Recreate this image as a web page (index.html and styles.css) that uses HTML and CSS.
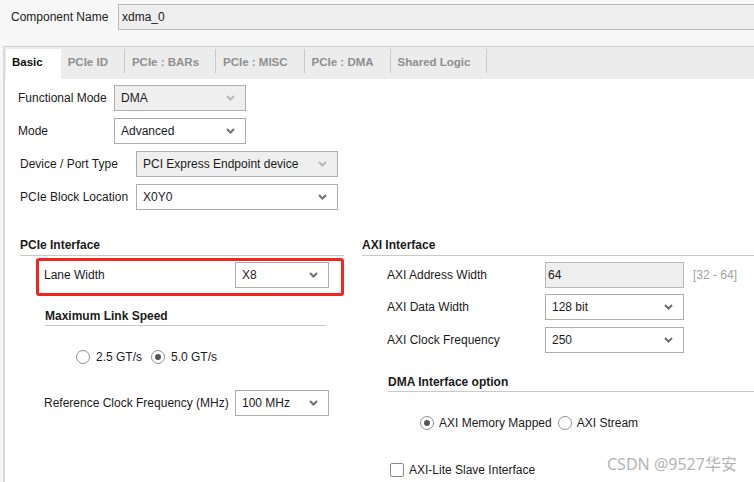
FILE: index.html
```html
<!DOCTYPE html>
<html lang="en">
  <head>
    <meta charset="UTF-8" />
    <meta name="viewport" content="width=device-width, initial-scale=1.0" />
    <title>Customize IP - xdma_0</title>
    <link rel="stylesheet" href="styles.css">
  </head>
  <body>
    <!-- Component name -->
    <div class="component-bar">
      <span class="component-label">Component Name</span>
      <div class="text-field component-name">xdma_0</div>
    </div>

    <div class="panel">
      <!-- Tabs -->
      <div class="tabs">
        <div class="tab active">Basic</div>
        <div class="tab">PCIe ID</div>
        <div class="tab">PCIe : BARs</div>
        <div class="tab">PCIe : MISC</div>
        <div class="tab">PCIe : DMA</div>
        <div class="tab">Shared Logic</div>
      </div>

      <div class="tab-body">
        <div class="field-row">
          <span class="label-short">Functional Mode</span>
          <div class="select disabled narrow">
            <span>DMA</span>
            <svg class="chevron" width="9" height="6" viewBox="0 0 9 6"><path d="M1 1l3.5 3.5L8 1" fill="none" stroke="currentColor" stroke-width="2"/></svg>
          </div>
        </div>
        <div class="field-row">
          <span class="label-short">Mode</span>
          <div class="select narrow">
            <span>Advanced</span>
            <svg class="chevron" width="9" height="6" viewBox="0 0 9 6"><path d="M1 1l3.5 3.5L8 1" fill="none" stroke="currentColor" stroke-width="2"/></svg>
          </div>
        </div>
        <div class="field-row indent">
          <span class="label-long">Device / Port Type</span>
          <div class="select disabled wide">
            <span>PCI Express Endpoint device</span>
            <svg class="chevron" width="9" height="6" viewBox="0 0 9 6"><path d="M1 1l3.5 3.5L8 1" fill="none" stroke="currentColor" stroke-width="2"/></svg>
          </div>
        </div>
        <div class="field-row indent">
          <span class="label-long">PCIe Block Location</span>
          <div class="select wide">
            <span>X0Y0</span>
            <svg class="chevron" width="9" height="6" viewBox="0 0 9 6"><path d="M1 1l3.5 3.5L8 1" fill="none" stroke="currentColor" stroke-width="2"/></svg>
          </div>
        </div>

        <div class="columns">
          <!-- PCIe Interface -->
          <div class="col-left">
            <div class="section-title">PCIe Interface</div>

            <div class="lane-box">
              <span class="label-pcie">Lane Width</span>
              <div class="select small">
                <span>X8</span>
                <svg class="chevron" width="9" height="6" viewBox="0 0 9 6"><path d="M1 1l3.5 3.5L8 1" fill="none" stroke="currentColor" stroke-width="2"/></svg>
              </div>
            </div>

            <div class="sub-title link-speed">Maximum Link Speed</div>
            <div class="radio-group speed-options">
              <span class="radio"></span><span class="option-text">2.5 GT/s</span>
              <span class="radio checked"></span><span class="option-text">5.0 GT/s</span>
            </div>

            <div class="ref-row">
              <span class="label-pcie">Reference Clock Frequency (MHz)</span>
              <div class="select small">
                <span>100 MHz</span>
                <svg class="chevron" width="9" height="6" viewBox="0 0 9 6"><path d="M1 1l3.5 3.5L8 1" fill="none" stroke="currentColor" stroke-width="2"/></svg>
              </div>
            </div>
          </div>

          <!-- AXI Interface -->
          <div class="col-right">
            <div class="section-title">AXI Interface</div>

            <div class="axi-row">
              <span class="label-axi">AXI Address Width</span>
              <div class="text-field medium">64</div>
              <span class="range">[32 - 64]</span>
            </div>
            <div class="axi-row">
              <span class="label-axi">AXI Data Width</span>
              <div class="select medium">
                <span>128 bit</span>
                <svg class="chevron" width="9" height="6" viewBox="0 0 9 6"><path d="M1 1l3.5 3.5L8 1" fill="none" stroke="currentColor" stroke-width="2"/></svg>
              </div>
            </div>
            <div class="axi-row clock-row">
              <span class="label-axi">AXI Clock Frequency</span>
              <div class="select medium">
                <span>250</span>
                <svg class="chevron" width="9" height="6" viewBox="0 0 9 6"><path d="M1 1l3.5 3.5L8 1" fill="none" stroke="currentColor" stroke-width="2"/></svg>
              </div>
            </div>

            <div class="sub-title dma-title">DMA Interface option</div>
            <div class="radio-group dma-options">
              <span class="radio checked"></span><span class="option-text">AXI Memory Mapped</span>
              <span class="radio"></span><span class="option-text">AXI Stream</span>
            </div>

            <div class="checkbox-row">
              <span class="checkbox"></span><span>AXI-Lite Slave Interface</span>
            </div>
          </div>
        </div>
      </div>
    </div>

    <div class="watermark">CSDN @9527华安</div>
  </body>
</html>
```

FILE: styles.css
```css
/* Customize IP dialog - Basic tab */

body {
  margin: 0;
  width: 754px;
  height: 482px;
  overflow: hidden;
  display: flex;
  flex-direction: column;
  font-family: "Liberation Sans", Arial, sans-serif;
  font-size: 12px;
  color: #1b1b1b;
  background-color: #f7f7f7;
}

/* Component name bar */
.component-bar {
  display: flex;
  align-items: center;
  padding: 4px 0 0 11px;
}

.component-label {
  width: 107px;
}

.text-field {
  box-sizing: border-box;
  height: 26px;
  display: flex;
  align-items: center;
  padding-left: 2px;
  border: 1px solid #b9b9b9;
  background-color: #eeeeee;
}

.component-name {
  flex: 1;
  padding-left: 3px;
  border-right: none;
}

/* Main panel */
.panel {
  flex: 1;
  margin: 16px 0 0 3px;
  border-top: 1px solid #cfcfcf;
  border-left: 2px solid #d9d9d9;
  background-color: #fff;
}

/* Tabs */
.tabs {
  box-sizing: border-box;
  height: 32px;
  display: flex;
  align-items: flex-start;
  padding: 2px 0 0 1px;
  background-color: #ececec;
}

.tab {
  padding: 7px 16px 5px 7px;
  line-height: 12px;
  font-size: 11.5px;
  font-weight: bold;
  color: #8f8f8f;
  border-right: 1px solid #c9c9c9;
}

.tab.active {
  padding: 7px 18px 11px 6px;
  color: #111;
  background-color: #fff;
  border-right: none;
}

/* Tab content */
.tab-body {
  padding: 6px 0 0 13px;
}

.field-row {
  display: flex;
  align-items: center;
  height: 26px;
  margin-bottom: 7px;
}

.field-row.indent {
  margin-left: 2px;
}

.label-short {
  width: 96px;
}

.label-long {
  width: 116px;
}

.label-pcie {
  width: 191px;
}

.label-axi {
  width: 158px;
}

/* Combo boxes */
.select {
  box-sizing: border-box;
  height: 26px;
  display: flex;
  align-items: center;
  justify-content: space-between;
  padding: 0 10px 0 6px;
  border: 1px solid #adadad;
  background-color: #fff;
}

.select .chevron {
  color: #6f6f6f;
}

.select.disabled {
  background-color: #efefef;
}

.select.disabled .chevron {
  color: #b8b8b8;
}

.narrow {
  width: 132px;
}

.wide {
  width: 202px;
}

.small {
  width: 94px;
}

.medium {
  width: 139px;
}

/* Two column area */
.columns {
  display: flex;
  margin-top: 28px;
}

.col-left {
  width: 324px;
  margin-left: 2px;
}

.col-right {
  flex: 1;
  margin-left: 18px;
}

.section-title,
.sub-title {
  font-weight: bold;
  line-height: 14px;
  padding-bottom: 3px;
  border-bottom: 1px solid #c9c9c9;
}

.sub-title {
  padding-bottom: 2px;
}

/* Red highlight around Lane Width */
.lane-box {
  display: flex;
  align-items: center;
  margin: 2px 0 0 16px;
  padding: 1px 12px 5px 5px;
  border: 3px solid #f2261f;
  border-radius: 3px;
}

.link-speed {
  width: 281px;
  margin: 13px 0 0 25px;
}

/* Radio buttons */
.radio-group {
  display: flex;
  align-items: center;
  height: 16px;
}

.speed-options {
  margin: 23px 0 0 56px;
}

.dma-options {
  margin: 23px 0 0 58px;
}

.radio {
  box-sizing: border-box;
  width: 14px;
  height: 14px;
  display: flex;
  align-items: center;
  justify-content: center;
  margin-right: 6px;
  border: 1px solid #909090;
  border-radius: 50%;
  background-color: #fff;
}

.dma-options .radio {
  margin-right: 5px;
}

.radio.checked::after {
  content: "";
  width: 6px;
  height: 6px;
  border-radius: 50%;
  background-color: #555;
}

.option-text {
  margin-right: 9px;
}

.dma-options .option-text {
  margin-right: 6px;
}

.ref-row {
  display: flex;
  align-items: center;
  height: 26px;
  margin: 25px 0 0 24px;
}

/* AXI side */
.axi-row {
  display: flex;
  align-items: center;
  height: 26px;
  margin: 6px 0 0 25px;
}

.axi-row.clock-row {
  margin-top: 7px;
}

.range {
  margin-left: 9px;
  color: #a3a3a3;
}

.dma-title {
  margin: 22px 0 0 26px;
}

.checkbox-row {
  display: flex;
  align-items: center;
  height: 16px;
  margin: 31px 0 0 28px;
}

.checkbox {
  box-sizing: border-box;
  width: 14px;
  height: 14px;
  margin-right: 5px;
  border: 1px solid #8a8a8a;
  border-radius: 2px;
  background-color: #fff;
}

/* Site watermark over the screenshot */
.watermark {
  position: absolute;
  left: 607px;
  top: 456px;
  line-height: 16px;
  font-family: "Noto Sans", "Noto Sans CJK SC", sans-serif;
  font-size: 16px;
  color: #b5b5b5;
}
```
